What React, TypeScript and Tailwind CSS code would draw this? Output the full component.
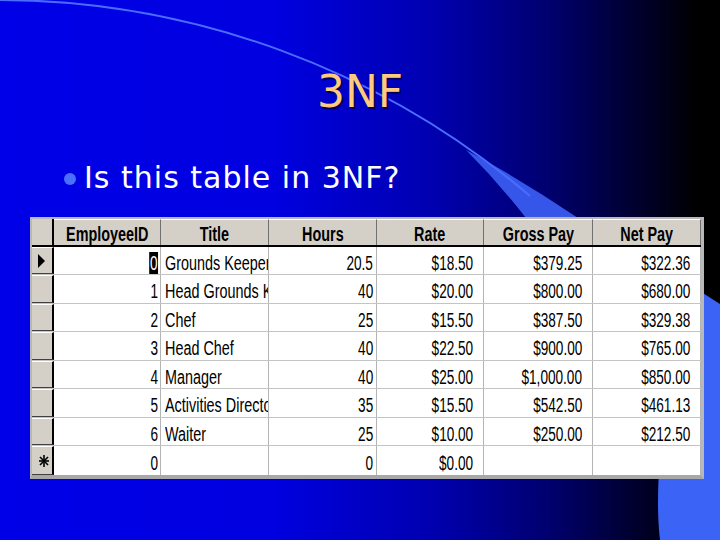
import React from "react";

type Row = {
  id: string;
  title: string;
  hours: string;
  rate: string;
  gross: string;
  net: string;
  h: string;
  marker?: "current" | "new";
};

const rows: Row[] = [
  { id: "0", title: "Grounds Keeper", hours: "20.5", rate: "$18.50", gross: "$379.25", net: "$322.36", h: "h-[28px]", marker: "current" },
  { id: "1", title: "Head Grounds Keeper", hours: "40", rate: "$20.00", gross: "$800.00", net: "$680.00", h: "h-[29px]" },
  { id: "2", title: "Chef", hours: "25", rate: "$15.50", gross: "$387.50", net: "$329.38", h: "h-[28px]" },
  { id: "3", title: "Head Chef", hours: "40", rate: "$22.50", gross: "$900.00", net: "$765.00", h: "h-[29px]" },
  { id: "4", title: "Manager", hours: "40", rate: "$25.00", gross: "$1,000.00", net: "$850.00", h: "h-[28px]" },
  { id: "5", title: "Activities Director", hours: "35", rate: "$15.50", gross: "$542.50", net: "$461.13", h: "h-[29px]" },
  { id: "6", title: "Waiter", hours: "25", rate: "$10.00", gross: "$250.00", net: "$212.50", h: "h-[28px]" },
  { id: "0", title: "", hours: "0", rate: "$0.00", gross: "", net: "", h: "h-[29px]", marker: "new" },
];

function HeaderCell({ label, w, last }: { label: string; w: string; last?: boolean }) {
  return (
    <div
      className={`${w} h-full flex items-center justify-center overflow-hidden bg-[#d4d0c8] ${
        last ? "" : "border-r border-[#707070]"
      } border-t border-t-white`}
    >
      <span className="inline-block whitespace-nowrap scale-x-[0.72] origin-center font-bold pt-[2px]">{label}</span>
    </div>
  );
}

function Cell({
  w,
  align,
  pad,
  children,
}: {
  w: string;
  align: "left" | "right";
  pad: string;
  children?: React.ReactNode;
}) {
  return (
    <div
      className={`${w} h-full flex items-center overflow-hidden border-r border-[#b4b4b4] bg-white pt-[4px] ${pad} ${
        align === "right" ? "justify-end" : "justify-start"
      }`}
    >
      {children ? (
        align === "right" ? (
          <span className="inline-block whitespace-nowrap scale-x-[0.68] origin-right">{children}</span>
        ) : (
          <span className="inline-block whitespace-nowrap scale-x-[0.72] origin-left">{children}</span>
        )
      ) : null}
    </div>
  );
}

export default function App() {
  return (
    <div className="relative w-[720px] h-[540px] overflow-hidden bg-[linear-gradient(to_right,#0000e8_0%,#0000e0_38%,#0000b0_60%,#000070_76%,#000030_88%,#000000_97%)]">
      <svg className="absolute inset-0" width="720" height="540" viewBox="0 0 720 540">
        <path d="M 698 290 L 720 304 L 720 540 L 660 540 C 654 490 660 390 698 290 Z" fill="#3b64f6" />
        <path d="M 466 150 Q 522 180 578 218 L 526 218 Q 498 182 466 150 Z" fill="#3656ea" />
        <path d="M -2 0 A 821 821 0 0 1 530 196" fill="none" stroke="#4a6cff" strokeWidth="2" />
      </svg>

      <div className="relative flex flex-col">
        <h1 className="mt-[70px] h-[44px] text-center text-[44px] leading-[44px] text-[#ffca80] font-['DejaVu_Sans',sans-serif] [text-shadow:2px_2px_0_#00005a]">
          3NF
        </h1>

        <div className="mt-[47px] ml-[64px] flex items-start h-[34px]">
          <div className="mt-[12px] w-[12px] h-[12px] rounded-full bg-[#4a70ff]" />
          <span className="ml-[8px] text-[30px] leading-[34px] tracking-[1px] text-white font-['DejaVu_Sans',sans-serif]">
            Is this table in 3NF?
          </span>
        </div>

        <div className="mt-[22px] ml-[30px] w-fit border-2 border-[#b8b8b8] border-r-[3px] border-b-4 border-b-[#a8a8a8] text-black text-[20px] leading-[20px] font-['Liberation_Sans',Arial,sans-serif]">
          <div className="flex h-[28px] border-b-2 border-black">
            <div className="w-[22px] h-full bg-[#d4d0c8] border-r-2 border-black" />
            <HeaderCell label="EmployeeID" w="w-[107px]" />
            <HeaderCell label="Title" w="w-[108px]" />
            <HeaderCell label="Hours" w="w-[108px]" />
            <HeaderCell label="Rate" w="w-[107px]" />
            <HeaderCell label="Gross Pay" w="w-[109px]" />
            <HeaderCell label="Net Pay" w="w-[108px]" />
          </div>

          {rows.map((r, i) => (
            <div key={i} className={`flex ${r.h} ${i < rows.length - 1 ? "border-b border-[#c4c4c4]" : ""}`}>
              <div className="w-[22px] h-full bg-[#d4d0c8] border-r-2 border-black border-t border-t-white border-b border-b-[#404040] flex items-center pl-[6px]">
                {r.marker === "current" ? (
                  <svg width="8" height="14" viewBox="0 0 8 14">
                    <path d="M0 0 L7 7 L0 14 Z" fill="#000" />
                  </svg>
                ) : null}
                {r.marker === "new" ? (
                  <svg width="12" height="14" viewBox="0 0 12 14">
                    <g stroke="#000" strokeWidth="1.6">
                      <line x1="6" y1="1" x2="6" y2="13" />
                      <line x1="1" y1="7" x2="11" y2="7" />
                      <line x1="2" y1="3" x2="10" y2="11" />
                      <line x1="10" y1="3" x2="2" y2="11" />
                    </g>
                  </svg>
                ) : null}
              </div>
              <Cell w="w-[107px]" align="right" pad="pr-[2px]">
                {r.marker === "current" ? <span className="bg-black text-white px-[1px]">{r.id}</span> : r.id}
              </Cell>
              <Cell w="w-[108px]" align="left" pad="pl-[4px]">
                {r.title}
              </Cell>
              <Cell w="w-[108px]" align="right" pad="pr-[3px]">
                {r.hours}
              </Cell>
              <Cell w="w-[107px]" align="right" pad="pr-[10px]">
                {r.rate}
              </Cell>
              <Cell w="w-[109px]" align="right" pad="pr-[10px]">
                {r.gross}
              </Cell>
              <Cell w="w-[108px]" align="right" pad="pr-[10px]">
                {r.net}
              </Cell>
            </div>
          ))}
        </div>
      </div>
    </div>
  );
}
